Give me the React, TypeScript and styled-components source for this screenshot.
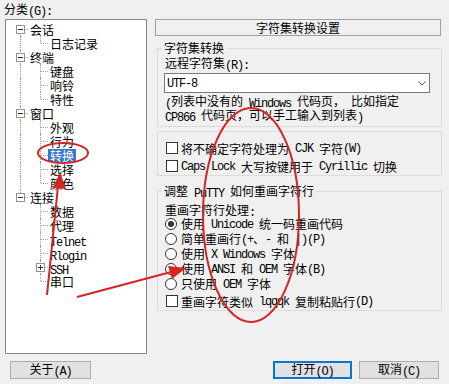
import React from 'react';
import styled, { createGlobalStyle } from 'styled-components';

const GlobalStyle = createGlobalStyle`
  html, body {
    margin: 0;
    padding: 0;
    background: #f0f0f0;
  }
  body {
    font-family: "Noto Sans CJK SC", "Liberation Sans", sans-serif;
    font-size: 12px;
    color: #000;
  }
`;

const Window = styled.div`
  position: relative;
  width: 449px;
  height: 384px;
  background: #f0f0f0;
  overflow: hidden;
`;

const Main = styled.div`
  display: flex;
  height: 354px;
`;

const LeftCol = styled.div`
  width: 144px;
  margin-left: 3px;
  display: flex;
  flex-direction: column;
`;

const CatLabel = styled.div`
  height: 19px;
  line-height: 18px;
  padding-left: 1px;
`;

const TreeBox = styled.div`
  flex: 1;
  margin-left: 2px;
  box-sizing: border-box;
  border: 1px solid #828790;
  background: #fff;
  padding: 2px 0 0 4px;
`;

const TreeRow = styled.div`
  display: flex;
  align-items: center;
  height: 14px;
  white-space: nowrap;
`;

type VLine = 'none' | 'full' | 'top' | 'bottom';

const Guide = styled.span<{ $v: VLine; $h?: boolean }>`
  position: relative;
  flex: none;
  width: 20px;
  height: 14px;

  &::before {
    content: '';
    position: absolute;
    left: 10px;
    width: 0;
    border-left: 1px dotted #a0a0a0;
    display: ${({ $v }) => ($v === 'none' ? 'none' : 'block')};
    top: ${({ $v }) => ($v === 'bottom' ? '7px' : '0')};
    bottom: ${({ $v }) => ($v === 'top' ? '7px' : '0')};
  }

  &::after {
    content: '';
    position: absolute;
    left: 11px;
    right: 2px;
    top: 7px;
    border-top: 1px dotted #a0a0a0;
    display: ${({ $h }) => ($h ? 'block' : 'none')};
  }
`;

const ExpanderIcon = styled.svg`
  position: absolute;
  left: 6px;
  top: 3px;
  width: 9px;
  height: 9px;
  z-index: 1;
`;

const NodeLabel = styled.span<{ $sel?: boolean }>`
  margin-left: -2px;
  padding: 0 2px;
  height: 13px;
  line-height: 13px;
  background: ${({ $sel }) => ($sel ? '#3679c6' : 'transparent')};
  color: ${({ $sel }) => ($sel ? '#fff' : '#000')};
`;

const RightCol = styled.div`
  width: 287px;
  margin-left: 8px;
  padding-top: 19px;
  display: flex;
  flex-direction: column;
`;

const PanelTitle = styled.div`
  height: 17px;
  margin-right: 1px;
  box-sizing: border-box;
  border: 1px solid #a0a0a0;
  text-align: center;
  line-height: 15px;
`;

const Group = styled.fieldset<{ $mt: number; $pt: number }>`
  margin: ${({ $mt }) => $mt}px 0 0 2px;
  padding: ${({ $pt }) => $pt}px 7px 0 7px;
  border: 1px solid #dcdcdc;
  min-width: 0;
  min-inline-size: 0;
`;

const GroupTitle = styled.legend`
  margin-left: -3px;
  padding: 0 2px;
  height: 14px;
  line-height: 14px;
`;

const FieldLabel = styled.div<{ $h: number }>`
  height: ${({ $h }) => $h}px;
  line-height: ${({ $h }) => $h}px;
`;

const Select = styled.div`
  display: flex;
  align-items: center;
  justify-content: space-between;
  width: 266px;
  height: 20px;
  margin: 3px 0 0 -1px;
  box-sizing: border-box;
  border: 1px solid #7a7a7a;
  background: #fff;
  padding: 0 3px 0 2px;
  line-height: 18px;
`;

const Note = styled.div`
  margin: 2px 0 3px;
  line-height: 12px;
  white-space: nowrap;
`;

const OptionRow = styled.div<{ $h: number; $mt?: number }>`
  display: flex;
  align-items: center;
  height: ${({ $h }) => $h}px;
  margin-top: ${({ $mt }) => $mt || 0}px;
  white-space: nowrap;
`;

const CheckBox = styled.span`
  flex: none;
  width: 12px;
  height: 12px;
  margin: 0 3px 0 1px;
  box-sizing: border-box;
  border: 1px solid #333;
  background: #fff;
`;

const Radio = styled.span<{ $on?: boolean }>`
  position: relative;
  flex: none;
  width: 12px;
  height: 12px;
  margin-right: 4px;
  box-sizing: border-box;
  border: 1px solid #333;
  border-radius: 50%;
  background: #fff;

  &::after {
    content: '';
    position: absolute;
    left: 2px;
    top: 2px;
    width: 6px;
    height: 6px;
    border-radius: 50%;
    background: #333;
    display: ${({ $on }) => ($on ? 'block' : 'none')};
  }
`;

const ButtonRow = styled.div`
  display: flex;
  justify-content: space-between;
  margin-top: 7px;
  padding: 0 10px;
`;

const ButtonGroup = styled.div`
  display: flex;
  gap: 7px;
`;

const Button = styled.button<{ $w: number; $default?: boolean }>`
  width: ${({ $w }) => $w}px;
  height: 18px;
  padding: 0;
  box-sizing: border-box;
  border: 1px solid ${({ $default }) => ($default ? '#0078d7' : '#adadad')};
  box-shadow: ${({ $default }) => ($default ? 'inset 0 0 0 1px #0078d7' : 'none')};
  background: #e1e1e1;
  font-family: "Noto Sans CJK SC", "Liberation Sans", sans-serif;
  font-size: 12px;
  line-height: 14px;
  color: #000;
`;

// half-width latin, 6px advance like SimSun
const Latin = styled.span`
  position: relative;
  top: 1px;
  font-family: "Liberation Mono", monospace;
  font-size: 12px;
  letter-spacing: -1.2px;
  white-space: pre;
`;

const Marks = styled.svg`
  position: absolute;
  left: 0;
  top: 0;
  width: 449px;
  height: 384px;
  pointer-events: none;
`;

const Txt = ({ children }: { children: string }) => {
  const parts = children.split(/([\x20-\x7e]+)/);
  return (
    <>
      {parts.map((p, i) =>
        !p ? null : /^[\x20-\x7e]+$/.test(p) ? (
          <Latin key={i}>{p}</Latin>
        ) : (
          <span key={i}>{p}</span>
        )
      )}
    </>
  );
};

const Expander = ({ plus }: { plus?: boolean }) => (
  <ExpanderIcon viewBox="0 0 9 9">
    <rect x="0.5" y="0.5" width="8" height="8" fill="#fff" stroke="#919191" />
    <path d="M2 4.5h5" stroke="#333" />
    {plus && <path d="M4.5 2v5" stroke="#333" />}
  </ExpanderIcon>
);

interface TreeNode {
  label: string;
  level: 0 | 1;
  exp?: 'minus' | 'plus';
  last?: boolean;
  sel?: boolean;
}

const tree: TreeNode[] = [
  { label: '会话', level: 0, exp: 'minus' },
  { label: '日志记录', level: 1, last: true },
  { label: '终端', level: 0, exp: 'minus' },
  { label: '键盘', level: 1 },
  { label: '响铃', level: 1 },
  { label: '特性', level: 1, last: true },
  { label: '窗口', level: 0, exp: 'minus' },
  { label: '外观', level: 1 },
  { label: '行为', level: 1 },
  { label: '转换', level: 1, sel: true },
  { label: '选择', level: 1 },
  { label: '颜色', level: 1, last: true },
  { label: '连接', level: 0, exp: 'minus', last: true },
  { label: '数据', level: 1 },
  { label: '代理', level: 1 },
  { label: 'Telnet', level: 1 },
  { label: 'Rlogin', level: 1 },
  { label: 'SSH', level: 1, exp: 'plus' },
  { label: '串口', level: 1, last: true },
];

const Tree = () => {
  let rootIsLast = false;
  return (
    <TreeBox>
      {tree.map((n, i) => {
        if (n.level === 0) {
          rootIsLast = !!n.last;
          const v: VLine = i === 0 ? 'bottom' : n.last ? 'top' : 'full';
          return (
            <TreeRow key={i}>
              <Guide $v={v} $h>
                {n.exp && <Expander plus={n.exp === 'plus'} />}
              </Guide>
              <NodeLabel $sel={n.sel}>
                <Txt>{n.label}</Txt>
              </NodeLabel>
            </TreeRow>
          );
        }
        return (
          <TreeRow key={i}>
            <Guide $v={rootIsLast ? 'none' : 'full'} />
            <Guide $v={n.last ? 'top' : 'full'} $h>
              {n.exp && <Expander plus={n.exp === 'plus'} />}
            </Guide>
            <NodeLabel $sel={n.sel}>
              <Txt>{n.label}</Txt>
            </NodeLabel>
          </TreeRow>
        );
      })}
    </TreeBox>
  );
};

const redrawModes = [
  { label: '使用 Unicode 统一码重画代码', on: true },
  { label: '简单重画行(+、- 和 |)(P)' },
  { label: '使用 X Windows 字体' },
  { label: '使用 ANSI 和 OEM 字体(B)' },
  { label: '只使用 OEM 字体' },
];

const Annotations = () => (
  <Marks viewBox="0 0 449 384">
    <g fill="none" stroke="#d42424" strokeWidth="2">
      <ellipse cx="63" cy="153" rx="25" ry="10" />
      <ellipse cx="251" cy="215" rx="48" ry="107" />
      <line x1="47" y1="295" x2="58" y2="186" />
      <line x1="77" y1="297" x2="171" y2="272" />
    </g>
    <g fill="#d42424">
      <polygon points="60,172 66,189 53,188" />
      <polygon points="186,268 172,279 168,266" />
    </g>
  </Marks>
);

const App = () => (
  <>
    <GlobalStyle />
    <Window>
      <Main>
        <LeftCol>
          <CatLabel>
            <Txt>分类(G):</Txt>
          </CatLabel>
          <Tree />
        </LeftCol>
        <RightCol>
          <PanelTitle>字符集转换设置</PanelTitle>

          <Group $mt={5} $pt={1}>
            <GroupTitle>字符集转换</GroupTitle>
            <FieldLabel $h={14}>
              <Txt>远程字符集(R):</Txt>
            </FieldLabel>
            <Select>
              <Txt>UTF-8</Txt>
              <svg width="8" height="5" viewBox="0 0 8 5">
                <path d="M0.5 0.5L4 4L7.5 0.5" fill="none" stroke="#606060" />
              </svg>
            </Select>
            <Note>
              <Txt>(列表中没有的 Windows 代码页， 比如指定</Txt>
              <br />
              <Txt>CP866 代码页，可以手工输入到列表)</Txt>
            </Note>
          </Group>

          <Group $mt={4} $pt={7}>
            <OptionRow $h={18}>
              <CheckBox />
              <Txt>将不确定字符处理为 CJK 字符(W)</Txt>
            </OptionRow>
            <OptionRow $h={18}>
              <CheckBox />
              <Txt>Caps Lock 大写按键用于 Cyrillic 切换</Txt>
            </OptionRow>
          </Group>

          <Group $mt={8} $pt={5}>
            <GroupTitle>
              <Txt>调整 PuTTY 如何重画字符行</Txt>
            </GroupTitle>
            <FieldLabel $h={13}>
              <Txt>重画字符行处理:</Txt>
            </FieldLabel>
            {redrawModes.map((m, i) => (
              <OptionRow key={i} $h={15}>
                <Radio $on={m.on} />
                <Txt>{m.label}</Txt>
              </OptionRow>
            ))}
            <OptionRow $h={18} $mt={1}>
              <CheckBox />
              <Txt>重画字符类似 lqqqk 复制粘贴行(D)</Txt>
            </OptionRow>
          </Group>
        </RightCol>
      </Main>
      <ButtonRow>
        <Button $w={81}>
          <Txt>关于(A)</Txt>
        </Button>
        <ButtonGroup>
          <Button $w={79} $default>
            <Txt>打开(O)</Txt>
          </Button>
          <Button $w={80}>
            <Txt>取消(C)</Txt>
          </Button>
        </ButtonGroup>
      </ButtonRow>
      <Annotations />
    </Window>
  </>
);

export default App;
